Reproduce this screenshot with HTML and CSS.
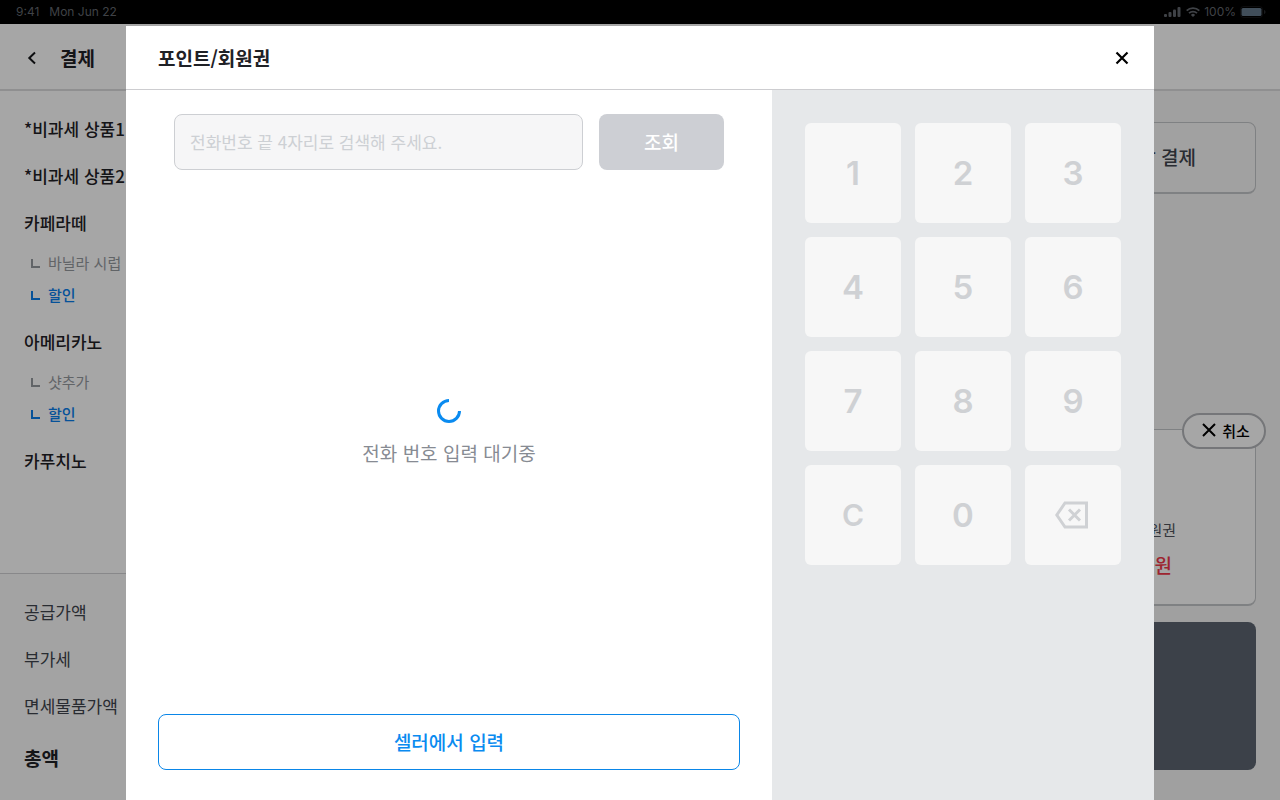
FILE: index.html
```html
<!DOCTYPE html>
<html lang="ko">
<head>
    <meta charset="UTF-8">
    <meta name="viewport" content="width=device-width, initial-scale=1.0">
    <title>포인트/회원권</title>
    <link rel="stylesheet" href="styles.css">
</head>
<body>
    <!-- Status bar -->
    <div class="status-bar">
        <div class="status-left">
            <span>9:41</span>
            <span>Mon Jun 22</span>
        </div>
        <div class="status-right">
            <svg width="18" height="12" viewBox="0 0 18 12" fill="currentColor">
                <rect x="0" y="8" width="3" height="3" rx="1"/>
                <rect x="4.500" y="6" width="3" height="5" rx="1"/>
                <rect x="9" y="3.500" width="3" height="7.500" rx="1"/>
                <rect x="13.500" y="1" width="3" height="10" rx="1"/>
            </svg>
            <svg width="14" height="12" viewBox="0 0 14 12" fill="none" stroke="currentColor" stroke-width="1.8">
                <path d="M0.7 4.6a9 9 0 0 1 12.6 0M3 7.2a5.7 5.7 0 0 1 8 0"/>
                <path d="M7 11L4.9 8.9a3 3 0 0 1 4.2 0z" fill="currentColor" stroke="none"/>
            </svg>
            <span>100%</span>
            <svg width="26" height="12" viewBox="0 0 26 12" fill="none">
                <rect x="0.5" y="0.5" width="22" height="11" rx="3" stroke="currentColor" opacity="0.2"/>
                <rect x="1.500" y="2" width="20" height="8" rx="1.5" fill="#64788b"/>
                <path d="M24 4v4c1-.3 1.5-1 1.5-2S25 4.300 24 4z" fill="currentColor" opacity="0.4"/>
            </svg>
        </div>
    </div>

    <!-- Payment page -->
    <header class="page-header">
        <button class="icon-button" aria-label="뒤로">
            <svg width="16" height="16" viewBox="0 0 16 16" fill="none" stroke="#15161a" stroke-width="2">
                <path d="M11 2.500L5.300 8l5.700 5.500"/>
            </svg>
        </button>
        <h1 class="page-title">결제</h1>
    </header>

    <main class="page">
        <section class="cart">
            <ul class="cart-list">
                <li class="cart-item">*비과세 상품1</li>
                <li class="cart-item">*비과세 상품2</li>
                <li class="cart-item">카페라떼
                    <ul class="options">
                        <li class="option">바닐라 시럽</li>
                        <li class="option discount">할인</li>
                    </ul>
                </li>
                <li class="cart-item">아메리카노
                    <ul class="options">
                        <li class="option">샷추가</li>
                        <li class="option discount">할인</li>
                    </ul>
                </li>
                <li class="cart-item">카푸치노</li>
            </ul>
            <div class="summary">
                <div>공급가액</div>
                <div>부가세</div>
                <div>면세물품가액</div>
                <div class="total">총액</div>
            </div>
        </section>

        <section class="payment">
            <button class="split-button">분할 결제</button>
            <div class="method-card">
                <button class="cancel-button">
                    <svg width="14" height="14" viewBox="0 0 14 14" fill="none" stroke="currentColor" stroke-width="2">
                        <path d="M1 1l12 12M13 1L1 13"/>
                    </svg>
                    취소
                </button>
                <div class="method-name">회원권</div>
                <div class="method-amount">원</div>
            </div>
            <div class="pay-box"></div>
        </section>
    </main>

    <!-- Points / membership modal -->
    <div class="overlay">
        <div class="modal" role="dialog" aria-labelledby="modal-title">
            <header class="modal-header">
                <h2 class="modal-title" id="modal-title">포인트/회원권</h2>
                <button class="icon-button" aria-label="닫기">
                    <svg width="16" height="16" viewBox="0 0 16 16" fill="none" stroke="#000" stroke-width="2.2">
                        <path d="M2.500 2.500l11 11M13.500 2.500l-11 11"/>
                    </svg>
                </button>
            </header>
            <div class="modal-body">
                <div class="lookup">
                    <form class="search">
                        <input class="search-input" type="text" aria-label="전화번호" placeholder="전화번호 끝 4자리로 검색해 주세요.">
                        <button class="search-button" type="button" disabled>조회</button>
                    </form>
                    <div class="waiting">
                        <svg width="24" height="24" viewBox="0 0 24 24" fill="none" stroke="#0a8bf0" stroke-width="3">
                            <path d="M12 1.500A10.500 10.500 0 1 0 22.500 12"/>
                        </svg>
                        <p class="waiting-text">전화 번호 입력 대기중</p>
                    </div>
                    <button class="seller-button">셀러에서 입력</button>
                </div>
                <div class="keypad">
                    <button class="key" disabled>1</button>
                    <button class="key" disabled>2</button>
                    <button class="key" disabled>3</button>
                    <button class="key" disabled>4</button>
                    <button class="key" disabled>5</button>
                    <button class="key" disabled>6</button>
                    <button class="key" disabled>7</button>
                    <button class="key" disabled>8</button>
                    <button class="key" disabled>9</button>
                    <button class="key key-clear" disabled>C</button>
                    <button class="key" disabled>0</button>
                    <button class="key" aria-label="지우기" disabled>
                        <svg width="36" height="28" viewBox="0 0 36 28" fill="none" stroke="currentColor" stroke-width="3">
                            <path d="M10 2h21.500v24H10L1.800 14z"/>
                            <path d="M14 8.500l11 11M25 8.500l-11 11"/>
                        </svg>
                    </button>
                </div>
            </div>
        </div>
    </div>
</body>
</html>
```
FILE: styles.css
```css
*,
*::before {
    box-sizing: border-box;
}

body {
    margin: 0;
    height: 100vh;
    display: flex;
    flex-direction: column;
    overflow: hidden;
    font-family: "Noto Sans CJK KR", sans-serif;
    font-size: 17px;
    line-height: 24px;
    color: #1f2126;
    background: #fff;
}

button,
input {
    font-family: inherit;
    margin: 0;
    padding: 0;
}

ul {
    list-style: none;
    margin: 0;
    padding: 0;
}

svg {
    display: block;
    flex: none;
}

/* Status bar */
.status-bar {
    display: flex;
    justify-content: space-between;
    align-items: center;
    height: 24px;
    padding: 0 14px 0 16px;
    background: #000;
    color: #62666d;
    font-family: Inter, sans-serif;
    font-size: 12px;
}

.status-left {
    display: flex;
    gap: 10px;
}

.status-right {
    display: flex;
    align-items: center;
    gap: 4px;
}

/* Page header */
.page-header {
    display: flex;
    align-items: center;
    gap: 20px;
    height: 67px;
    padding: 2px 24px 0;
    border-bottom: 2px solid #dcdcde;
}

.page-title,
.modal-title {
    margin: 0;
    font-size: 19px;
    line-height: 28px;
    font-weight: 700;
}

.icon-button {
    border: none;
    background: none;
}

/* Cart */
.page {
    flex: 1;
    display: flex;
    min-height: 0;
}

.cart {
    display: flex;
    flex-direction: column;
    justify-content: space-between;
    width: 40%;
}

.cart-list {
    display: flex;
    flex-direction: column;
    gap: 23px;
    padding: 26px 24px;
    font-weight: 500;
}

.options {
    display: flex;
    flex-direction: column;
    gap: 8px;
    padding: 16px 0 0 7px;
    font-size: 15px;
    font-weight: 400;
    color: #969a9f;
}

.option {
    display: flex;
    align-items: center;
    gap: 8px;
}

.option::before {
    content: "";
    width: 9px;
    height: 9px;
    border-left: 2px solid;
    border-bottom: 2px solid;
}

.discount {
    color: #0a7eec;
    font-weight: 500;
}

.summary {
    display: flex;
    flex-direction: column;
    gap: 23px;
    padding: 26px 24px 28px;
    border-top: 1px solid #d2d2d4;
    background: #fafafa;
    color: #40444d;
}

.total {
    padding-top: 3px;
    font-size: 19px;
    line-height: 28px;
    font-weight: 700;
    color: #1f2126;
}

/* Payment */
.payment {
    flex: 1;
    display: flex;
    flex-direction: column;
    gap: 16px;
    padding: 31px 24px 30px;
    background: #f6f6f6;
}

.split-button {
    height: 72px;
    margin-bottom: auto;
    padding: 0 59px 2px 0;
    border: 1px solid #c4c6c9;
    border-bottom-width: 2px;
    border-radius: 8px;
    background: #f8f8f8;
    font-size: 19px;
    font-weight: 500;
    text-align: right;
    color: #40444d;
}

.method-card {
    position: relative;
    height: 177px;
    padding: 88px 79px 0;
    border: 1px solid #c4c6c9;
    border-bottom-width: 2px;
    border-radius: 8px;
    background: #fff;
    text-align: right;
}

.method-name {
    font-size: 15px;
    color: #50545c;
}

.method-amount {
    padding: 11px 4px 0;
    font-size: 19px;
    font-weight: 500;
    color: #f2384a;
}

.cancel-button {
    position: absolute;
    top: -17px;
    right: -11px;
    display: flex;
    align-items: center;
    justify-content: center;
    gap: 6px;
    width: 84px;
    height: 36px;
    padding: 0 0 2px 4px;
    border: 2px solid #b4b6ba;
    border-radius: 18px;
    background: #fff;
    font-size: 15px;
    font-weight: 500;
    color: #000;
}

.pay-box {
    height: 148px;
    border-radius: 8px;
    background: #5c6571;
}

/* Modal */
.overlay {
    position: fixed;
    inset: 0;
    display: flex;
    padding: 26px 126px 0;
    background: rgba(0, 0, 0, 0.35);
}

.modal {
    flex: 1;
    display: flex;
    flex-direction: column;
    background: #fff;
}

.modal-header {
    display: flex;
    justify-content: space-between;
    align-items: center;
    height: 64px;
    padding: 0 24px 0 32px;
    border-bottom: 1px solid #cdcdd0;
}

.modal-body {
    flex: 1;
    display: flex;
}

.lookup {
    flex: 1;
    display: flex;
    flex-direction: column;
    padding: 24px 32px 30px;
}

.search {
    display: flex;
    gap: 16px;
    padding: 0 16px;
}

.search-input {
    flex: 1;
    min-width: 0;
    height: 56px;
    padding: 0 15px 2px;
    border: 1px solid #cdcfd3;
    border-radius: 8px;
    background: #f6f6f7;
    font-size: 17px;
}

.search-input::placeholder {
    color: #cdd0d4;
}

.search-button {
    width: 125px;
    padding-bottom: 2px;
    border: none;
    border-radius: 8px;
    background: #cdcfd4;
    font-size: 19px;
    font-weight: 500;
    color: #fff;
}

.waiting {
    flex: 1;
    display: flex;
    flex-direction: column;
    align-items: center;
    justify-content: center;
    gap: 16px;
    padding-bottom: 18px;
}

.waiting-text {
    margin: 0;
    font-size: 19px;
    line-height: 28px;
    color: #878b93;
}

.seller-button {
    height: 56px;
    padding-bottom: 2px;
    border: 1px solid #0a86e8;
    border-radius: 8px;
    background: #fff;
    font-size: 19px;
    font-weight: 500;
    color: #0a8bf0;
}

/* Keypad */
.keypad {
    display: grid;
    grid-template-columns: repeat(3, 1fr);
    grid-auto-rows: 100px;
    gap: 14px;
    width: 382px;
    padding: 33px;
    background: #e6e8ea;
}

.key {
    display: flex;
    align-items: center;
    justify-content: center;
    border: none;
    border-radius: 6px;
    background: #f7f7f7;
    font-family: Inter, sans-serif;
    font-size: 33px;
    font-weight: 600;
    color: #cfd1d4;
}

.key-clear {
    font-size: 30px;
}
```
